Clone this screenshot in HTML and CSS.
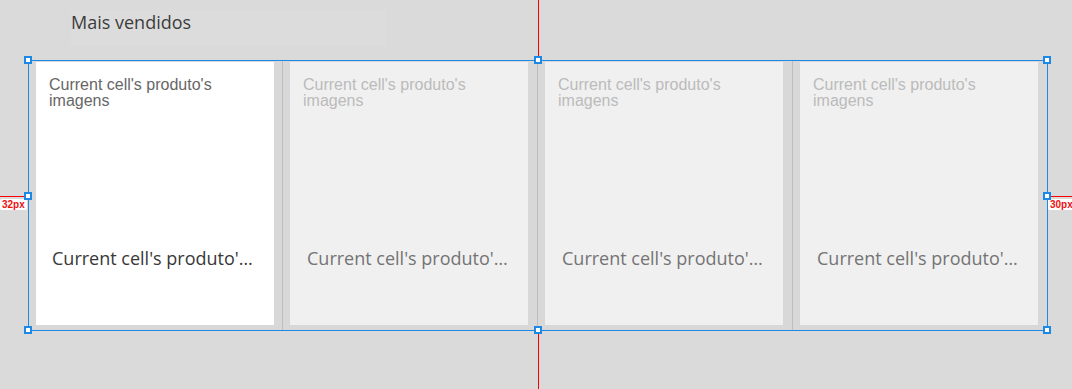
FILE: index.html
```html
<!DOCTYPE html>
<html lang="pt">
<head>
<meta charset="utf-8">
<title>Mais vendidos</title>
<link rel="stylesheet" href="styles.css">
</head>
<body>
  <div class="title-box"><h2 class="title">Mais vendidos</h2></div>
  <div class="frame">
    <div class="cell">
      <div class="card card-active">
        <div class="img-label">Current cell's produto's imagens</div>
        <div class="name">Current cell's produto'…</div>
      </div>
    </div>
    <div class="cell sep">
      <div class="card">
        <div class="img-label">Current cell's produto's imagens</div>
        <div class="name">Current cell's produto'…</div>
      </div>
    </div>
    <div class="cell sep">
      <div class="card">
        <div class="img-label">Current cell's produto's imagens</div>
        <div class="name">Current cell's produto'…</div>
      </div>
    </div>
    <div class="cell sep">
      <div class="card">
        <div class="img-label">Current cell's produto's imagens</div>
        <div class="name">Current cell's produto'…</div>
      </div>
    </div>
  </div>

  <div class="guide guide-v guide-v-top"></div>
  <div class="guide guide-v guide-v-bottom"></div>
  <div class="guide guide-h guide-h-left"></div>
  <div class="guide guide-h guide-h-right"></div>
  <div class="dim dim-left">32px</div>
  <div class="dim dim-right">30px</div>

  <div class="handle h-tl"></div>
  <div class="handle h-tc"></div>
  <div class="handle h-tr"></div>
  <div class="handle h-ml"></div>
  <div class="handle h-mr"></div>
  <div class="handle h-bl"></div>
  <div class="handle h-bc"></div>
  <div class="handle h-br"></div>
</body>
</html>
```

FILE: styles.css
```css
html, body {
  margin: 0;
  padding: 0;
}
body {
  background: #dadada;
  width: 1072px;
  height: 389px;
  overflow: hidden;
  position: relative;
  padding-top: 10px;
  box-sizing: border-box;
}
.title-box {
  margin-left: 71px;
  width: 315px;
  height: 36px;
  background: #dcdcdc;
}
.title {
  margin: 0;
  font-family: "Open Sans", sans-serif;
  font-weight: 500;
  font-size: 18px;
  line-height: 24px;
  color: #3c3c3c;
}
.frame {
  margin-top: 14px;
  margin-left: 28px;
  width: 1020px;
  height: 271px;
  box-sizing: border-box;
  border: 1px solid #1e88e5;
  display: flex;
}
.cell {
  width: 253px;
  height: 100%;
  padding: 1px 8px 5px 7px;
  box-sizing: border-box;
  background: #d8d8d8;
}
.cell.sep {
  width: 255px;
  border-left: 1px solid #bdbdbd;
  padding-right: 9px;
}
.card {
  width: 238px;
  height: 263px;
  background: #f0f0f0;
  display: flex;
  flex-direction: column;
  box-sizing: border-box;
}
.card-active {
  background: #ffffff;
}
.img-label {
  flex: 1;
  padding: 15px 13px 0 13px;
  font-family: "Liberation Sans", Arial, sans-serif;
  font-size: 16px;
  line-height: 16px;
  color: #bbbbbb;
}
.card-active .img-label {
  color: #666666;
}
.name {
  height: 24px;
  margin-bottom: 55px;
  padding-left: 17px;
  white-space: nowrap;
  font-family: "Open Sans", sans-serif;
  font-weight: 500;
  font-size: 18px;
  line-height: 24px;
  color: #747474;
}
.card-active .name {
  padding-left: 16px;
  color: #383838;
}

/* overlays */
.guide {
  position: absolute;
  background: #ff0000;
}
.guide-v {
  left: 538px;
  width: 1px;
}
.guide-v-top { top: 0; height: 57px; }
.guide-v-bottom { top: 333px; height: 56px; }
.guide-h {
  top: 196px;
  height: 1px;
}
.guide-h-left { left: 0; width: 25px; }
.guide-h-right { left: 1051px; width: 21px; }
.dim {
  position: absolute;
  top: 199px;
  height: 11px;
  padding: 0 2px;
  background: #ffffff;
  border-radius: 2px;
  font-family: "Liberation Sans", Arial, sans-serif;
  font-weight: 700;
  font-size: 10px;
  line-height: 11px;
  color: #ee1111;
}
.dim-left { left: 0; }
.dim-right { left: 1048px; }

.handle {
  position: absolute;
  width: 8px;
  height: 8px;
  box-sizing: border-box;
  border: 2px solid #1e88e5;
  background: #ffffff;
}
.h-tl { left: 24px; top: 56px; }
.h-tc { left: 534px; top: 56px; }
.h-tr { left: 1043px; top: 56px; }
.h-ml { left: 24px; top: 192px; }
.h-mr { left: 1043px; top: 192px; }
.h-bl { left: 24px; top: 326px; }
.h-bc { left: 534px; top: 326px; }
.h-br { left: 1043px; top: 326px; }
```
